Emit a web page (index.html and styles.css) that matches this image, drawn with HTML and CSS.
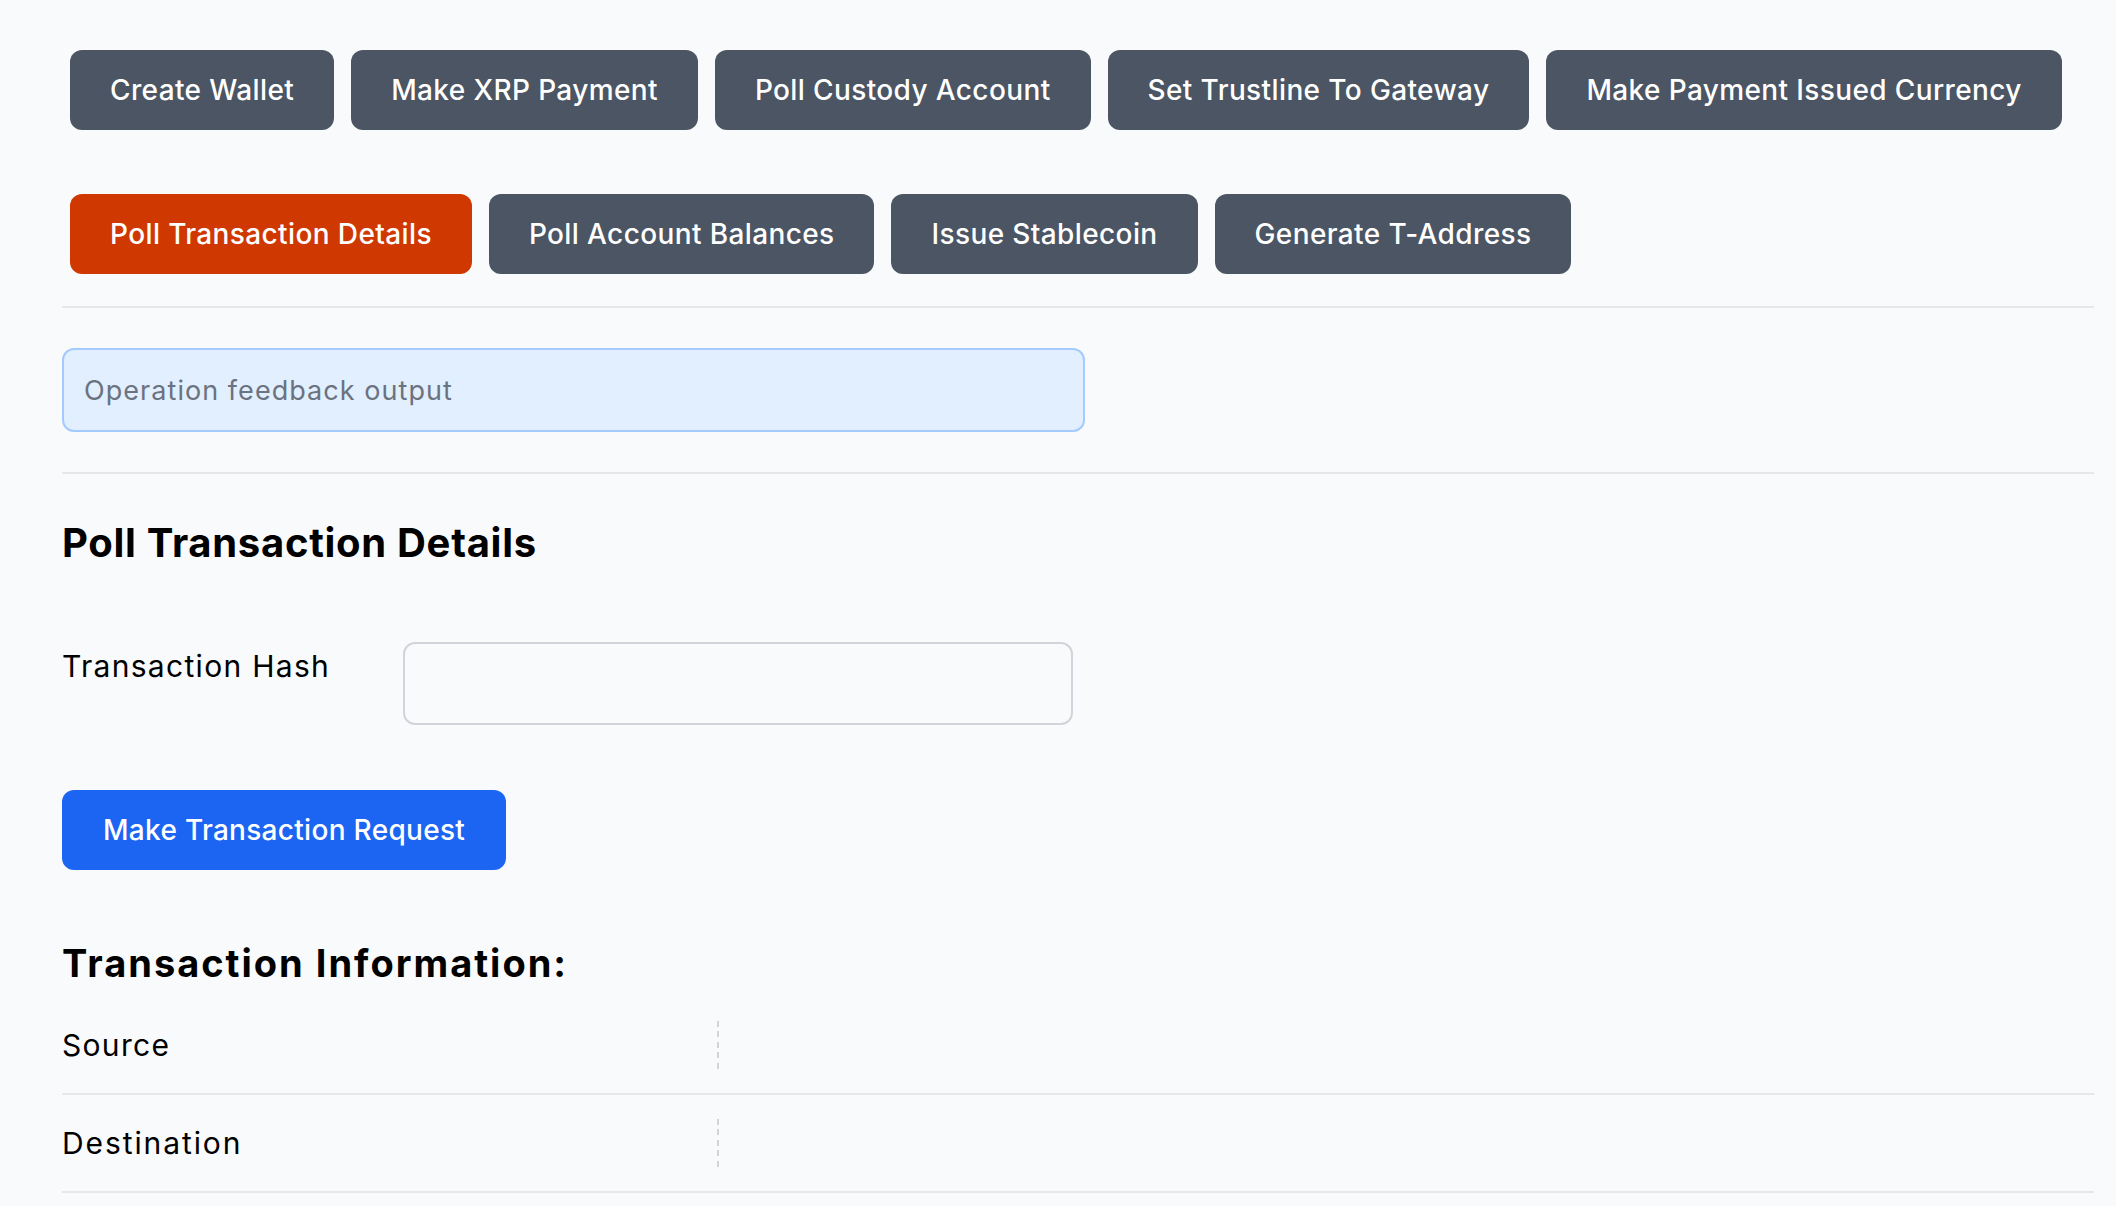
FILE: index.html
```html
<!DOCTYPE html>
<html lang="en">
<head>
<meta charset="utf-8">
<title>Poll Transaction Details</title>
<link rel="stylesheet" href="styles.css">
</head>
<body>
<div class="page">
  <nav class="toolbar">
    <div class="btn-row">
      <button class="btn">Create Wallet</button>
      <button class="btn">Make XRP Payment</button>
      <button class="btn">Poll Custody Account</button>
      <button class="btn">Set Trustline To Gateway</button>
      <button class="btn">Make Payment Issued Currency</button>
    </div>
    <div class="btn-row second">
      <button class="btn active">Poll Transaction Details</button>
      <button class="btn">Poll Account Balances</button>
      <button class="btn">Issue Stablecoin</button>
      <button class="btn">Generate T-Address</button>
    </div>
  </nav>
  <hr class="divider">
  <div class="feedback">Operation feedback output</div>
  <hr class="divider second-divider">
  <section class="panel">
    <h2 class="title">Poll Transaction Details</h2>
    <div class="field">
      <label class="field-label" for="hash">Transaction Hash</label>
      <input class="field-input" id="hash" type="text">
    </div>
    <button class="submit">Make Transaction Request</button>
    <h3 class="subtitle">Transaction Information:</h3>
    <div class="info">
      <div class="info-row">
        <div class="info-key">Source</div>
        <div class="info-sep"></div>
        <div class="info-val"></div>
      </div>
      <div class="info-row">
        <div class="info-key wide">Destination</div>
        <div class="info-sep"></div>
        <div class="info-val"></div>
      </div>
    </div>
  </section>
</div>
</body>
</html>
```
FILE: styles.css
```css
* { box-sizing: border-box; }
html, body {
  margin: 0;
  background: #F9FAFB;
  font-family: Inter, "Noto Sans", sans-serif;
  color: #000;
}
.page {
  padding: 0 22px 0 62px;
}
.toolbar {
  padding-top: 50px;
}
.btn-row {
  display: flex;
  gap: 17px;
  padding-left: 8px;
}
.btn-row.second {
  margin-top: 64px;
}
.btn {
  height: 80px;
  padding: 0 40px;
  border: none;
  border-radius: 12px;
  background: #4B5563;
  color: #fff;
  font-family: Inter, "Noto Sans", sans-serif;
  font-size: 28px;
  font-weight: 500;
  letter-spacing: 0.38px;
  white-space: nowrap;
}
.btn.active {
  background: #D03801;
}
.divider {
  margin: 32px 0 0;
  height: 2px;
  border: none;
  background: #E5E7EB;
}
.second-divider {
  margin-top: 40px;
}
.feedback {
  margin-top: 40px;
  width: 1023px;
  height: 84px;
  border: 2px solid #A4CAFE;
  border-radius: 12px;
  background: #E1EFFE;
  padding: 0 20px;
  display: flex;
  align-items: center;
  color: #6B7280;
  font-size: 27px;
  letter-spacing: 1.05px;
}
.title {
  margin: 45px 0 0;
  font-size: 40px;
  line-height: 48px;
  font-weight: 700;
  letter-spacing: 0.7px;
}
.field {
  margin-top: 75px;
  display: flex;
  align-items: flex-start;
}
.field-label {
  width: 341px;
  padding-top: 6px;
  font-size: 30px;
  line-height: 36px;
  letter-spacing: 1.3px;
}
.field-input {
  width: 670px;
  height: 83px;
  border: 2px solid #D1D5DB;
  border-radius: 12px;
  background: #F9FAFB;
  font-family: inherit;
  font-size: 28px;
  padding: 0 20px;
}
.submit {
  display: block;
  margin-top: 65px;
  height: 80px;
  padding: 0 41px;
  border: none;
  border-radius: 12px;
  background: #1C64F2;
  color: #fff;
  font-family: Inter, "Noto Sans", sans-serif;
  font-size: 28px;
  font-weight: 500;
  letter-spacing: 0.3px;
}
.subtitle {
  margin: 70px 0 0;
  font-size: 38px;
  line-height: 46px;
  font-weight: 700;
  letter-spacing: 2px;
}
.info {
  margin-top: 11px;
}
.info-row {
  display: flex;
  align-items: center;
  height: 98px;
  border-bottom: 2px solid #E5E7EB;
}
.info-key {
  width: 655px;
  font-size: 30px;
  line-height: 36px;
  letter-spacing: 1.3px;
}
.info-key.wide {
  letter-spacing: 1.9px;
}
.info-sep {
  width: 2px;
  height: 48px;
  background: repeating-linear-gradient(to bottom, #D1D5DB 0 6px, transparent 6px 10.4px);
}
.info-val {
  flex: 1;
}
```
